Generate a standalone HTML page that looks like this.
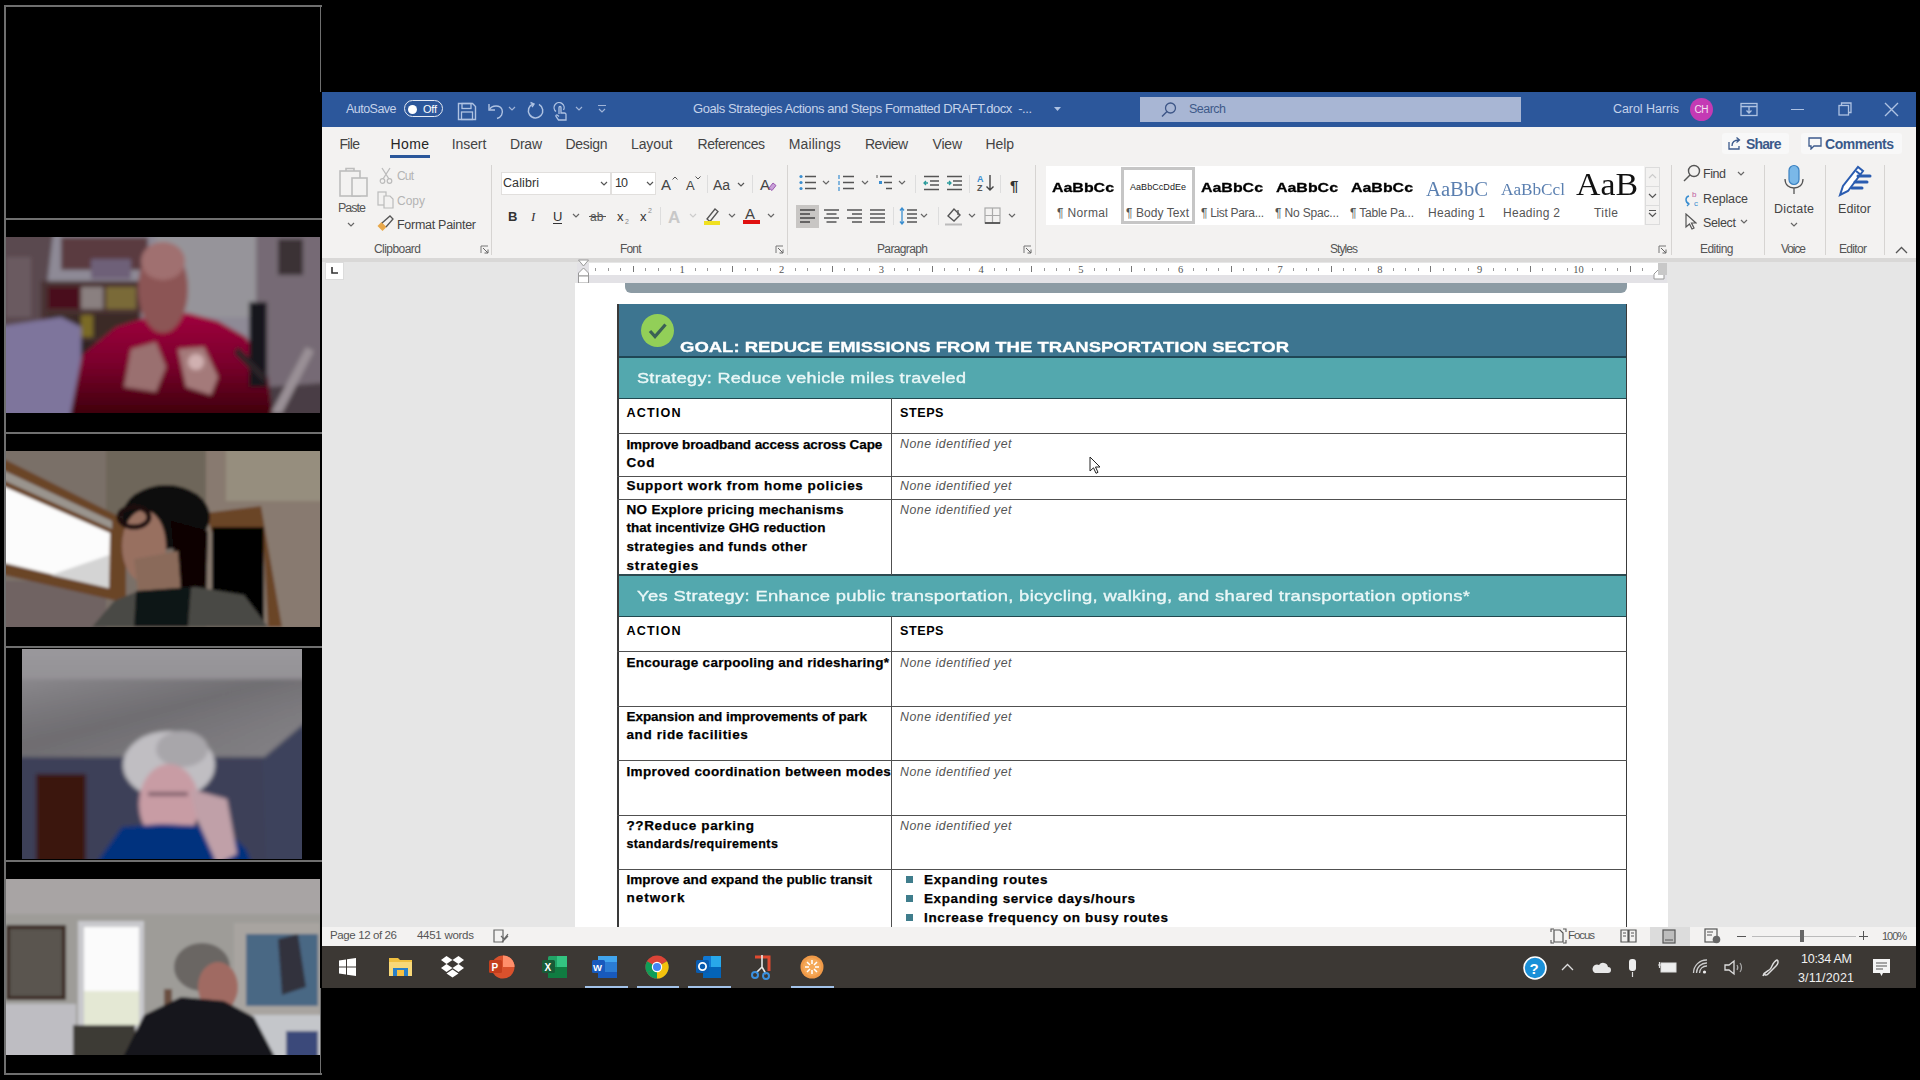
<!DOCTYPE html>
<html><head><meta charset="utf-8">
<style>
*{margin:0;padding:0;box-sizing:border-box}
html,body{width:1920px;height:1080px;overflow:hidden;background:#000;font-family:"Liberation Sans",sans-serif;position:relative}
.a{position:absolute}
.t{position:absolute;white-space:nowrap;line-height:1}
</style></head><body>
<div class="a" style="left:4px;top:5px;width:2px;height:1070px;background:#6f6f6f"></div>
<div class="a" style="left:320px;top:5px;width:1px;height:87px;background:#6f6f6f"></div>
<div class="a" style="left:320px;top:988px;width:1px;height:87px;background:#6f6f6f"></div>
<div class="a" style="left:4px;top:5px;width:318px;height:2px;background:#6f6f6f"></div>
<div class="a" style="left:4px;top:218px;width:318px;height:2px;background:#6f6f6f"></div>
<div class="a" style="left:4px;top:432px;width:318px;height:2px;background:#6f6f6f"></div>
<div class="a" style="left:4px;top:646px;width:318px;height:2px;background:#6f6f6f"></div>
<div class="a" style="left:4px;top:860px;width:318px;height:2px;background:#6f6f6f"></div>
<div class="a" style="left:4px;top:1073px;width:318px;height:2px;background:#6f6f6f"></div>
<svg class="a" style="left:6px;top:237px" width="314" height="176" viewBox="0 0 314 176"><defs><linearGradient id="sw237" x1="0" y1="0" x2="0" y2="1"><stop offset="0" stop-color="#a0003e"/><stop offset="0.45" stop-color="#7a002c"/><stop offset="1" stop-color="#300004"/></linearGradient><filter id="f237" x="-5%" y="-5%" width="110%" height="110%"><feGaussianBlur stdDeviation="2.0"/></filter><clipPath id="cf237"><rect width="314" height="176"/></clipPath></defs><g clip-path="url(#cf237)"><g filter="url(#f237)">
<rect x="-10" y="-10" width="340" height="200" fill="#8e8a96"/>
<rect x="150" y="-10" width="110" height="90" fill="#96949a"/>
<rect x="250" y="-10" width="80" height="200" fill="#766a74"/>
<polygon points="262,150 330,145 330,190 262,190" fill="#4a3e44"/>
<polygon points="-10,-10 48,-10 42,40 35,95 -10,100" fill="#5a4a50"/>
<rect x="0" y="20" width="25" height="60" fill="#6a5a60"/>
<rect x="55" y="0" width="87" height="33" fill="#5a3a40"/>
<rect x="85" y="22" width="40" height="20" fill="#6e6078"/>
<rect x="35" y="44" width="100" height="92" fill="#4a3030"/>
<rect x="42" y="50" width="33" height="22" fill="#48101c"/>
<rect x="75" y="50" width="22" height="22" fill="#8a8080"/>
<rect x="100" y="50" width="30" height="22" fill="#7a6a38"/>
<rect x="42" y="77" width="90" height="25" fill="#3a2a28"/>
<rect x="75" y="78" width="12" height="22" fill="#7a6a28"/>
<rect x="70" y="104" width="60" height="30" fill="#2e2424"/>
<polygon points="-10,90 55,80 75,90 75,190 -10,190" fill="#7e749c"/>
<polygon points="62,190 76,118 110,90 148,78 182,76 212,84 240,100 262,140 268,190" fill="url(#sw237)"/>
<ellipse cx="157" cy="52" rx="25" ry="44" fill="#8c5454"/>
<ellipse cx="157" cy="24" rx="22" ry="19" fill="#a07070"/>
<polygon points="118,150 125,112 150,105 160,130 150,155" fill="#9a7070"/>
<polygon points="172,112 198,110 212,140 205,158 180,150" fill="#a47a7a"/>
<ellipse cx="190" cy="125" rx="8" ry="8" fill="#d0b0b0"/>
<rect x="243" y="65" width="18" height="85" fill="#18161a"/>
<rect x="272" y="2" width="25" height="36" fill="#3a3034"/>
<polygon points="265,176 300,110 308,114 276,176" fill="#9a9096"/><polygon points="232,110 262,140 258,146 228,116" fill="#2a2428"/>
</g></g></svg>
<svg class="a" style="left:6px;top:451px" width="314" height="176" viewBox="0 0 314 176"><defs><filter id="f451" x="-5%" y="-5%" width="110%" height="110%"><feGaussianBlur stdDeviation="1.8"/></filter><clipPath id="cf451"><rect width="314" height="176"/></clipPath></defs><g clip-path="url(#cf451)"><g filter="url(#f451)">
<rect x="-10" y="-10" width="340" height="200" fill="#7a7068"/>
<rect x="100" y="-10" width="100" height="80" fill="#6e665a"/>
<rect x="200" y="-10" width="130" height="200" fill="#887a70"/>
<rect x="220" y="-10" width="110" height="60" fill="#968e7e"/>
<rect x="-10" y="130" width="110" height="60" fill="#706462"/>
<polygon points="-10,4 110,64 120,72 120,152 -10,122" fill="#6a4428"/>
<polygon points="-10,16 106,70 106,78 -10,26" fill="#9a948e"/>
<polygon points="-10,32 104,82 103,137 -10,110" fill="#fcfcfc"/>
<polygon points="45,124 103,104 103,137" fill="#d4d4d4"/>
<polygon points="200,62 255,55 276,176 262,176 257,76 206,82" fill="#6a4428"/>
<rect x="206" y="76" width="52" height="100" fill="#000"/>
<ellipse cx="160" cy="66" rx="44" ry="32" fill="#0e0808"/>
<polygon points="165,70 202,80 200,150 172,146" fill="#0a0606"/>
<ellipse cx="138" cy="95" rx="22" ry="36" fill="#987060"/>
<polygon points="128,108 172,100 175,142 132,142" fill="#8a6a5a"/>
<ellipse cx="128" cy="66" rx="15" ry="10" fill="none" stroke="#1a0a08" stroke-width="5"/>
<polygon points="86,176 108,150 132,140 190,136 238,144 262,176" fill="#4a4844"/>
<polygon points="128,176 130,140 185,136 182,176" fill="#101414"/>
</g></g></svg>
<svg class="a" style="left:22px;top:649px" width="280" height="210" viewBox="0 0 280 210"><defs><linearGradient id="gl649" x1="0" y1="0" x2="1" y2="1"><stop offset="0" stop-color="#6a686c" stop-opacity="0.2"/><stop offset="0.45" stop-color="#6a686c" stop-opacity="0.85"/><stop offset="1" stop-color="#6a686c" stop-opacity="0"/></linearGradient><linearGradient id="g649" x1="0" y1="0" x2="0" y2="1"><stop offset="0" stop-color="#9c9a9e"/><stop offset="1" stop-color="#848286"/></linearGradient><filter id="f649" x="-5%" y="-5%" width="110%" height="110%"><feGaussianBlur stdDeviation="2.0"/></filter><clipPath id="cf649"><rect width="280" height="210"/></clipPath></defs><g clip-path="url(#cf649)"><g filter="url(#f649)">
<rect x="-10" y="-10" width="300" height="230" fill="#3c4058"/>
<polygon points="-10,-10 290,-10 290,68 244,108 -10,108" fill="url(#g649)"/><polygon points="-10,30 290,30 290,68 244,108 -10,108" fill="url(#gl649)"/>
<polygon points="240,110 290,68 290,220 244,220" fill="#3e425c"/>
<rect x="14" y="125" width="50" height="90" fill="#3a1210"/>
<ellipse cx="147" cy="116" rx="46" ry="34" fill="#c0bec2"/>
<ellipse cx="160" cy="100" rx="26" ry="18" fill="#a8a6aa"/>
<ellipse cx="147" cy="155" rx="30" ry="40" fill="#c89ca4"/>
<rect x="126" y="143" width="40" height="4" fill="#7a5a66"/>
<polygon points="70,220 100,178 140,175 200,178 224,200 232,220" fill="#06337e"/>
<polygon points="168,140 205,150 215,205 195,215 175,170" fill="#c0a0a8"/>
</g></g></svg>
<svg class="a" style="left:6px;top:879px" width="314" height="176" viewBox="0 0 314 176"><defs><filter id="f879" x="-5%" y="-5%" width="110%" height="110%"><feGaussianBlur stdDeviation="1.8"/></filter><clipPath id="cf879"><rect width="314" height="176"/></clipPath></defs><g clip-path="url(#cf879)"><g filter="url(#f879)">
<rect x="-10" y="-10" width="340" height="200" fill="#9e9c98"/>
<rect x="-10" y="-10" width="340" height="45" fill="#a8a4a4"/>
<rect x="-10" y="125" width="80" height="65" fill="#bebdc2"/><rect x="225" y="136" width="100" height="50" fill="#c4c6ca"/>
<rect x="0" y="46" width="60" height="75" fill="#3a2a20"/>
<rect x="4" y="50" width="52" height="67" fill="#5a5450"/>
<rect x="72" y="42" width="66" height="108" fill="#c8c8cc"/>
<rect x="78" y="48" width="55" height="98" fill="#fbfbfb"/>
<rect x="78" y="112" width="55" height="34" fill="#e4e8d4"/>
<rect x="228" y="44" width="86" height="92" fill="#a8a4a0"/>
<rect x="240" y="55" width="72" height="72" fill="#4a6884"/>
<polygon points="272,60 292,55 300,108 276,116" fill="#30323c"/>
<rect x="158" y="110" width="8" height="25" fill="#6a5040"/>
<ellipse cx="196" cy="88" rx="28" ry="24" fill="#6a6664"/>
<ellipse cx="212" cy="108" rx="20" ry="25" fill="#a06a62"/>
<rect x="67" y="146" width="62" height="34" fill="#3e3a34"/>
<polygon points="116,180 138,136 175,118 218,122 248,138 270,180" fill="#18161a"/>
<rect x="280" y="152" width="32" height="28" fill="#3a4a7a"/>
</g></g></svg>
<div class="a" style="left:322px;top:92px;width:1594px;height:896px;background:#f3f2f1"></div>
<div class="a" style="left:322px;top:92px;width:1594px;height:35px;background:#2c579b"></div>
<div class="t" id="t1" style="left:346.0px;top:103.12px;font-size:12.50px;color:#c4d2ea;letter-spacing:-0.531px;">AutoSave</div>
<div class="a" style="left:404px;top:100px;width:39px;height:17px;border:1.5px solid #e4eaf4;border-radius:9px"></div>
<div class="a" style="left:408px;top:105px;width:9px;height:9px;border-radius:50%;background:#fff"></div>
<div class="t" id="t2" style="left:423.0px;top:103.89px;font-size:11.00px;color:#fff;letter-spacing:-0.242px;">Off</div>
<svg class="a" style="left:457px;top:102px" width="20" height="19" viewBox="0 0 20 19"><path d="M1.5 1.5h14l3 3v13h-17z" fill="none" stroke="#aec2e2" stroke-width="1.4"/><rect x="5" y="1.5" width="9" height="5" fill="none" stroke="#aec2e2" stroke-width="1.3"/><rect x="4.5" y="10" width="11" height="7.5" fill="none" stroke="#aec2e2" stroke-width="1.3"/></svg>
<svg class="a" style="left:487px;top:101px" width="18" height="19" viewBox="0 0 18 19"><path d="M2 3v6h6" fill="none" stroke="#aec2e2" stroke-width="1.4"/><path d="M2.5 8.5C5 4 13 3.5 15 8.5c1.5 4-1 8-5 9" fill="none" stroke="#aec2e2" stroke-width="1.4"/></svg>
<svg class="a" style="left:508px;top:106px" width="8" height="6" viewBox="0 0 8 6"><path d="M1 1l3 3 3-3" fill="none" stroke="#a0b4d8" stroke-width="1.2"/></svg>
<svg class="a" style="left:526px;top:101px" width="19" height="19" viewBox="0 0 19 19"><path d="M7 3A7.2 7.2 0 1 0 13 3.4" fill="none" stroke="#aec2e2" stroke-width="1.5"/><path d="M4.5 1.5L8 3 6 6" fill="none" stroke="#aec2e2" stroke-width="1.4"/></svg>
<svg class="a" style="left:552px;top:102px" width="16" height="19" viewBox="0 0 16 19"><path d="M4 9.5A5 5 0 1 1 11.5 8" fill="none" stroke="#aec2e2" stroke-width="1.3"/><path d="M7 12V5.5a1 1 0 0 1 2 0V11h3.5a1.5 1.5 0 0 1 1.5 1.5V18H6.5L4 14.5a1 1 0 0 1 1.5-1.3L7 14.5" fill="none" stroke="#aec2e2" stroke-width="1.3"/></svg>
<svg class="a" style="left:575px;top:106px" width="8" height="6" viewBox="0 0 8 6"><path d="M1 1l3 3 3-3" fill="none" stroke="#a0b4d8" stroke-width="1.2"/></svg>
<svg class="a" style="left:597px;top:104px" width="10" height="11" viewBox="0 0 10 11"><path d="M1 1.5h8M2 5l3 3 3-3" fill="none" stroke="#a0b4d8" stroke-width="1.2"/></svg>
<div class="t" id="t3" style="left:693.0px;top:102.00px;font-size:13.00px;color:#c4d2ea;letter-spacing:-0.443px;">Goals Strategies Actions and Steps Formatted DRAFT.docx&nbsp; -...</div>
<svg class="a" style="left:1053px;top:106px" width="9" height="6" viewBox="0 0 9 6"><path d="M1 1h7l-3.5 4z" fill="#aec2e2"/></svg>
<div class="a" style="left:1140px;top:97px;width:381px;height:25px;background:#a8b6d4"></div>
<svg class="a" style="left:1160px;top:101px" width="18" height="18" viewBox="0 0 18 18"><circle cx="10.5" cy="7" r="5" fill="none" stroke="#3d5687" stroke-width="1.3"/><path d="M7 10.5L2 15.5" stroke="#3d5687" stroke-width="1.4"/></svg>
<div class="t" id="t4" style="left:1189.0px;top:102.92px;font-size:12.50px;color:#3f5a89;letter-spacing:-0.522px;">Search</div>
<div class="t" id="t5" style="left:1613.0px;top:103.42px;font-size:12.50px;color:#c4d2ea;letter-spacing:-0.062px;">Carol Harris</div>
<div class="a" style="left:1690px;top:98px;width:23px;height:23px;border-radius:50%;background:#c43ab4"></div>
<div class="t" id="t6" style="left:1694.5px;top:104.53px;font-size:10.00px;color:#f4e0f0;letter-spacing:-0.453px;">CH</div>
<svg class="a" style="left:1740px;top:102px" width="18" height="15" viewBox="0 0 18 15"><rect x="1" y="1.5" width="16" height="12" fill="none" stroke="#aec2e2" stroke-width="1.3"/><path d="M1 4.5h16M9 5v6M6.5 8.5L9 11l2.5-2.5" fill="none" stroke="#aec2e2" stroke-width="1.3"/></svg>
<div class="a" style="left:1791px;top:109px;width:13px;height:1.3px;background:#aec2e2"></div>
<svg class="a" style="left:1838px;top:102px" width="14" height="14" viewBox="0 0 14 14"><rect x="1" y="3.5" width="9.5" height="9.5" fill="none" stroke="#aec2e2" stroke-width="1.3"/><path d="M3.5 3.5V1h9.5v9.5H10.5" fill="none" stroke="#aec2e2" stroke-width="1.3"/></svg>
<svg class="a" style="left:1884px;top:102px" width="15" height="15" viewBox="0 0 15 15"><path d="M1 1l13 13M14 1L1 14" stroke="#aec2e2" stroke-width="1.4"/></svg>
<div class="t" id="t7" style="left:339.5px;top:136.90px;font-size:14.00px;color:#444;letter-spacing:-0.688px;">File</div>
<div class="t" id="t8" style="left:390.5px;top:136.90px;font-size:14.00px;color:#262626;letter-spacing:0.380px;">Home</div>
<div class="t" id="t9" style="left:451.8px;top:136.90px;font-size:14.00px;color:#444;letter-spacing:-0.103px;">Insert</div>
<div class="t" id="t10" style="left:510.0px;top:136.90px;font-size:14.00px;color:#444;letter-spacing:-0.224px;">Draw</div>
<div class="t" id="t11" style="left:565.5px;top:136.90px;font-size:14.00px;color:#444;letter-spacing:-0.319px;">Design</div>
<div class="t" id="t12" style="left:631.0px;top:136.90px;font-size:14.00px;color:#444;letter-spacing:-0.109px;">Layout</div>
<div class="t" id="t13" style="left:697.5px;top:136.90px;font-size:14.00px;color:#444;letter-spacing:-0.455px;">References</div>
<div class="t" id="t14" style="left:788.8px;top:136.90px;font-size:14.00px;color:#444;letter-spacing:0.092px;">Mailings</div>
<div class="t" id="t15" style="left:865.0px;top:136.90px;font-size:14.00px;color:#444;letter-spacing:-0.581px;">Review</div>
<div class="t" id="t16" style="left:932.5px;top:136.90px;font-size:14.00px;color:#444;letter-spacing:-0.198px;">View</div>
<div class="t" id="t17" style="left:985.5px;top:136.90px;font-size:14.00px;color:#444;letter-spacing:-0.099px;">Help</div>
<div class="a" style="left:390px;top:154.5px;width:40px;height:3px;background:#2b579a"></div>
<div class="a" style="left:1722px;top:133px;width:67px;height:21px;background:#f8f8f8;border-radius:3px"></div>
<svg class="a" style="left:1728px;top:136px" width="14" height="14" viewBox="0 0 14 14"><path d="M1 6v7h10v-3" fill="none" stroke="#3c5a8c" stroke-width="1.3"/><path d="M4 10c0-4 3-6 7-6M8.5 1.5L11.5 4 8.5 6.5" fill="none" stroke="#3c5a8c" stroke-width="1.3"/></svg>
<div class="t" id="t18" style="left:1746.0px;top:136.55px;font-size:14.00px;font-weight:bold;color:#3b5a8a;letter-spacing:-0.855px;">Share</div>
<div class="a" style="left:1801px;top:133px;width:101px;height:21px;background:#f8f8f8;border-radius:3px"></div>
<svg class="a" style="left:1808px;top:137px" width="14" height="13" viewBox="0 0 14 13"><path d="M1 1h12v8H6l-3 3V9H1z" fill="none" stroke="#3c5a8c" stroke-width="1.3"/></svg>
<div class="t" id="t19" style="left:1825.0px;top:136.55px;font-size:14.00px;font-weight:bold;color:#3b5a8a;letter-spacing:-0.480px;">Comments</div>
<div class="a" style="left:491.0px;top:165px;width:1px;height:90px;background:#d6d4d2"></div>
<div class="a" style="left:787.0px;top:165px;width:1px;height:90px;background:#d6d4d2"></div>
<div class="a" style="left:1035.0px;top:165px;width:1px;height:90px;background:#d6d4d2"></div>
<div class="a" style="left:1671.0px;top:165px;width:1px;height:90px;background:#d6d4d2"></div>
<div class="a" style="left:1763.5px;top:165px;width:1px;height:90px;background:#d6d4d2"></div>
<div class="a" style="left:1825.0px;top:165px;width:1px;height:90px;background:#d6d4d2"></div>
<div class="a" style="left:1883.5px;top:165px;width:1px;height:90px;background:#d6d4d2"></div>
<div class="t" id="t20" style="left:374.0px;top:242.64px;font-size:12.00px;color:#555;letter-spacing:-0.547px;">Clipboard</div>
<div class="t" id="t21" style="left:620.0px;top:242.64px;font-size:12.00px;color:#555;letter-spacing:-0.839px;">Font</div>
<div class="t" id="t22" style="left:877.0px;top:242.64px;font-size:12.00px;color:#555;letter-spacing:-0.631px;">Paragraph</div>
<div class="t" id="t23" style="left:1330.0px;top:242.64px;font-size:12.00px;color:#555;letter-spacing:-0.938px;">Styles</div>
<div class="t" id="t24" style="left:1700.0px;top:242.64px;font-size:12.00px;color:#555;letter-spacing:-0.534px;">Editing</div>
<div class="t" id="t25" style="left:1781.0px;top:242.64px;font-size:12.00px;color:#555;letter-spacing:-1.090px;">Voice</div>
<div class="t" id="t26" style="left:1839.0px;top:242.64px;font-size:12.00px;color:#555;letter-spacing:-0.672px;">Editor</div>
<svg class="a" style="left:480px;top:245px" width="9" height="9" viewBox="0 0 9 9"><path d="M1 8V1h7" fill="none" stroke="#777" stroke-width="1"/><path d="M3 3l5 5M4.5 8H8V4.5" fill="none" stroke="#666" stroke-width="1"/></svg>
<svg class="a" style="left:775px;top:245px" width="9" height="9" viewBox="0 0 9 9"><path d="M1 8V1h7" fill="none" stroke="#777" stroke-width="1"/><path d="M3 3l5 5M4.5 8H8V4.5" fill="none" stroke="#666" stroke-width="1"/></svg>
<svg class="a" style="left:1023px;top:245px" width="9" height="9" viewBox="0 0 9 9"><path d="M1 8V1h7" fill="none" stroke="#777" stroke-width="1"/><path d="M3 3l5 5M4.5 8H8V4.5" fill="none" stroke="#666" stroke-width="1"/></svg>
<svg class="a" style="left:1658px;top:245px" width="9" height="9" viewBox="0 0 9 9"><path d="M1 8V1h7" fill="none" stroke="#777" stroke-width="1"/><path d="M3 3l5 5M4.5 8H8V4.5" fill="none" stroke="#666" stroke-width="1"/></svg>
<svg class="a" style="left:1895px;top:246px" width="13" height="8" viewBox="0 0 13 8"><path d="M1 7l5.5-5.5L12 7" fill="none" stroke="#555" stroke-width="1.3"/></svg>
<svg class="a" style="left:338px;top:166px" width="32" height="34" viewBox="0 0 32 34"><rect x="2" y="5" width="20" height="25" fill="none" stroke="#bdbdbd" stroke-width="1.6"/><path d="M8 5V2.5h8V5" fill="none" stroke="#bdbdbd" stroke-width="1.6"/><rect x="14" y="12" width="15" height="18" fill="#f3f2f1" stroke="#bdbdbd" stroke-width="1.6"/></svg>
<div class="t" id="t27" style="left:338.0px;top:202.22px;font-size:12.50px;color:#555;letter-spacing:-0.992px;">Paste</div>
<svg class="a" style="left:347px;top:222px" width="8" height="5" viewBox="0 0 8 5"><path d="M1 1l3 3 3-3" fill="none" stroke="#666" stroke-width="1.2"/></svg>
<svg class="a" style="left:379px;top:167px" width="14" height="17" viewBox="0 0 14 17"><path d="M3 1l7 11M11 1L4 12" stroke="#bbb" stroke-width="1.3"/><circle cx="3.5" cy="14" r="2.3" fill="none" stroke="#bbb" stroke-width="1.2"/><circle cx="10.5" cy="14" r="2.3" fill="none" stroke="#bbb" stroke-width="1.2"/></svg>
<div class="t" id="t28" style="left:397.0px;top:170.34px;font-size:12.00px;color:#b4b4b4;letter-spacing:-0.844px;">Cut</div>
<svg class="a" style="left:377px;top:191px" width="17" height="18" viewBox="0 0 17 18"><rect x="1" y="1" width="8" height="13" fill="none" stroke="#bbb" stroke-width="1.2"/><path d="M7 5h6l3 3v9H7z" fill="#f3f2f1" stroke="#bbb" stroke-width="1.2"/></svg>
<div class="t" id="t29" style="left:397.0px;top:194.84px;font-size:12.00px;color:#b4b4b4;letter-spacing:-0.005px;">Copy</div>
<svg class="a" style="left:376px;top:215px" width="18" height="18" viewBox="0 0 18 18"><path d="M1.5 11l5 5 4-4-5-5z" fill="#e8a84a"/><path d="M6 8l8-7 3 3-7 8" fill="none" stroke="#555" stroke-width="1.3"/></svg>
<div class="t" id="t30" style="left:397.0px;top:218.62px;font-size:12.50px;color:#444;letter-spacing:-0.282px;">Format Painter</div>
<div class="a" style="left:501px;top:172px;width:110px;height:23px;background:#fff;border:1px solid #e1dfdd"></div>
<div class="a" style="left:611px;top:172px;width:45px;height:23px;background:#fff;border:1px solid #e1dfdd"></div>
<div class="t" id="t31" style="left:503.0px;top:177.42px;font-size:12.50px;color:#333;letter-spacing:0.094px;">Calibri</div>
<div class="t" id="t32" style="left:615.0px;top:177.42px;font-size:12.50px;color:#333;letter-spacing:-0.906px;">10</div>
<svg class="a" style="left:600px;top:181px" width="8" height="6" viewBox="0 0 8 6"><path d="M1 1l3 3 3-3" fill="none" stroke="#555" stroke-width="1.2"/></svg>
<svg class="a" style="left:646px;top:181px" width="8" height="6" viewBox="0 0 8 6"><path d="M1 1l3 3 3-3" fill="none" stroke="#555" stroke-width="1.2"/></svg>
<div class="t" id="t33" style="left:661.0px;top:177.30px;font-size:15.00px;color:#444;">A</div>
<svg class="a" style="left:672px;top:176px" width="6" height="4" viewBox="0 0 6 4"><path d="M0.5 3.5l2.5-2.5 2.5 2.5" fill="none" stroke="#555" stroke-width="1"/></svg>
<div class="t" id="t34" style="left:686.0px;top:179.00px;font-size:13.00px;color:#444;">A</div>
<svg class="a" style="left:695px;top:176px" width="6" height="4" viewBox="0 0 6 4"><path d="M0.5 0.5l2.5 2.5 2.5-2.5" fill="none" stroke="#555" stroke-width="1"/></svg>
<div class="a" style="left:707px;top:175px;width:1px;height:18px;background:#ddd"></div>
<div class="t" id="t35" style="left:713.0px;top:178.15px;font-size:14.00px;color:#444;">Aa</div>
<svg class="a" style="left:737px;top:182px" width="8" height="5" viewBox="0 0 8 5"><path d="M1 1l3 3 3-3" fill="none" stroke="#555" stroke-width="1.2"/></svg>
<div class="a" style="left:752px;top:175px;width:1px;height:18px;background:#ddd"></div>
<div class="t" id="t36" style="left:760.0px;top:177.30px;font-size:15.00px;color:#444;">A</div>
<svg class="a" style="left:767px;top:181px" width="10" height="10" viewBox="0 0 10 10"><path d="M2 7l4-5 3 2.5-4 5z" fill="#c8a0d8" stroke="#9a5ab0" stroke-width="1"/></svg>
<div class="t" id="t37" style="left:508.0px;top:210.00px;font-size:13.00px;font-weight:bold;color:#333;">B</div>
<div class="t" id="t38" style="left:531.0px;top:210.06px;font-size:13.00px;font-style:italic;color:#333;font-family:'Liberation Serif',serif;">I</div>
<div class="t" id="t39" style="left:553.0px;top:210.00px;font-size:13.00px;color:#333;">U</div>
<div class="a" style="left:553px;top:223px;width:9px;height:1px;background:#333"></div>
<svg class="a" style="left:572px;top:213px" width="8" height="5" viewBox="0 0 8 5"><path d="M1 1l3 3 3-3" fill="none" stroke="#666" stroke-width="1.2"/></svg>
<div class="t" id="t40" style="left:590.0px;top:210.84px;font-size:12.00px;color:#555;">ab</div>
<div class="a" style="left:589px;top:216px;width:17px;height:1.2px;background:#555"></div>
<div class="t" id="t41" style="left:617.0px;top:210.00px;font-size:13.00px;color:#333;">x</div>
<div class="t" id="t42" style="left:625.0px;top:218.07px;font-size:7.00px;color:#888;">2</div>
<div class="t" id="t43" style="left:640.0px;top:210.00px;font-size:13.00px;color:#333;">x</div>
<div class="t" id="t44" style="left:648.0px;top:207.07px;font-size:7.00px;color:#888;">2</div>
<div class="a" style="left:660px;top:207px;width:1px;height:18px;background:#ddd"></div>
<div class="t" id="t45" style="left:668.0px;top:208.61px;font-size:17.00px;font-weight:bold;color:#c8c8c8;">A</div>
<svg class="a" style="left:689px;top:213px" width="8" height="5" viewBox="0 0 8 5"><path d="M1 1l3 3 3-3" fill="none" stroke="#ccc" stroke-width="1.2"/></svg>
<svg class="a" style="left:703px;top:206px" width="18" height="19" viewBox="0 0 18 19"><path d="M4 13l8-10 3 2.5-8 10z" fill="none" stroke="#555" stroke-width="1.3"/><rect x="1" y="15" width="16" height="4" fill="#f0e020"/></svg>
<svg class="a" style="left:728px;top:213px" width="8" height="5" viewBox="0 0 8 5"><path d="M1 1l3 3 3-3" fill="none" stroke="#666" stroke-width="1.2"/></svg>
<div class="t" id="t46" style="left:745.0px;top:206.30px;font-size:15.00px;color:#444;">A</div>
<div class="a" style="left:743px;top:220px;width:17px;height:4px;background:#e01010"></div>
<svg class="a" style="left:767px;top:213px" width="8" height="5" viewBox="0 0 8 5"><path d="M1 1l3 3 3-3" fill="none" stroke="#666" stroke-width="1.2"/></svg>
<svg class="a" style="left:799px;top:174px" width="18" height="17" viewBox="0 0 18 17"><circle cx="2" cy="2.5" r="1.6" fill="#3a8ed0"/><circle cx="2" cy="8.5" r="1.6" fill="#3a8ed0"/><circle cx="2" cy="14.5" r="1.6" fill="#3a8ed0"/><path d="M6 2.5h11M6 8.5h11M6 14.5h11" stroke="#555" stroke-width="1.5"/></svg>
<svg class="a" style="left:837px;top:174px" width="18" height="17" viewBox="0 0 18 17"><path d="M2 1v4M2 7v4M2 13v4" stroke="#3a8ed0" stroke-width="1.2"/><path d="M6 2.5h11M6 8.5h11M6 14.5h11" stroke="#555" stroke-width="1.5"/></svg>
<svg class="a" style="left:876px;top:174px" width="18" height="17" viewBox="0 0 18 17"><path d="M1 1v3" stroke="#555" stroke-width="1"/><path d="M4 2.5h12M8 8.5h8M10 14.5h6" stroke="#555" stroke-width="1.5"/><rect x="3" y="7" width="3" height="3" fill="#3a8ed0"/></svg>
<svg class="a" style="left:822px;top:180px" width="8" height="5" viewBox="0 0 8 5"><path d="M1 1l3 3 3-3" fill="none" stroke="#666" stroke-width="1.2"/></svg>
<svg class="a" style="left:861px;top:180px" width="8" height="5" viewBox="0 0 8 5"><path d="M1 1l3 3 3-3" fill="none" stroke="#666" stroke-width="1.2"/></svg>
<svg class="a" style="left:898px;top:180px" width="8" height="5" viewBox="0 0 8 5"><path d="M1 1l3 3 3-3" fill="none" stroke="#666" stroke-width="1.2"/></svg>
<div class="a" style="left:915px;top:175px;width:1px;height:18px;background:#ddd"></div>
<svg class="a" style="left:923px;top:175px" width="17" height="16" viewBox="0 0 17 16"><path d="M1 1.5h15M7 6h9M7 10h9M1 14.5h15" stroke="#555" stroke-width="1.5"/><path d="M5 8H1M3 6l-2 2 2 2" fill="none" stroke="#2a9a9a" stroke-width="1.3"/></svg>
<svg class="a" style="left:946px;top:175px" width="17" height="16" viewBox="0 0 17 16"><path d="M1 1.5h15M7 6h9M7 10h9M1 14.5h15" stroke="#555" stroke-width="1.5"/><path d="M1 8h4M3 6l2 2-2 2" fill="none" stroke="#2a9a9a" stroke-width="1.3"/></svg>
<div class="a" style="left:969px;top:175px;width:1px;height:18px;background:#ddd"></div>
<div class="t" id="t47" style="left:977.0px;top:175.38px;font-size:9.00px;font-weight:bold;color:#3a8ed0;">A</div>
<div class="t" id="t48" style="left:977.0px;top:184.38px;font-size:9.00px;font-weight:bold;color:#555;">Z</div>
<svg class="a" style="left:985px;top:174px" width="10" height="18" viewBox="0 0 10 18"><path d="M5 1v15M1.5 12.5L5 16l3.5-3.5" fill="none" stroke="#444" stroke-width="1.4"/></svg>
<div class="a" style="left:1000px;top:175px;width:1px;height:18px;background:#ddd"></div>
<div class="t" id="t49" style="left:1010.0px;top:178.30px;font-size:15.00px;font-weight:bold;color:#333;">&para;</div>
<div class="a" style="left:796px;top:205px;width:23px;height:23px;background:#c8c6c4"></div>
<svg class="a" style="left:799px;top:208px" width="17" height="16" viewBox="0 0 17 16"><path d="M1 2h15M1 6h10M1 10h15M1 14h10" stroke="#444" stroke-width="1.6"/></svg>
<svg class="a" style="left:823px;top:208px" width="17" height="16" viewBox="0 0 17 16"><path d="M1 2h15M3.5 6h10M1 10h15M3.5 14h10" stroke="#555" stroke-width="1.5"/></svg>
<svg class="a" style="left:846px;top:208px" width="17" height="16" viewBox="0 0 17 16"><path d="M1 2h15M6 6h10M1 10h15M6 14h10" stroke="#555" stroke-width="1.5"/></svg>
<svg class="a" style="left:869px;top:208px" width="17" height="16" viewBox="0 0 17 16"><path d="M1 2h15M1 6h15M1 10h15M1 14h15" stroke="#555" stroke-width="1.5"/></svg>
<div class="a" style="left:893px;top:207px;width:1px;height:18px;background:#ddd"></div>
<svg class="a" style="left:899px;top:207px" width="19" height="18" viewBox="0 0 19 18"><path d="M3 1v16M1 3.5L3 1l2 2.5M1 14.5L3 17l2-2.5" fill="none" stroke="#3a8ed0" stroke-width="1.3"/><path d="M8 3h10M8 7h10M8 11h10M8 15h10" stroke="#555" stroke-width="1.5"/></svg>
<svg class="a" style="left:920px;top:213px" width="8" height="5" viewBox="0 0 8 5"><path d="M1 1l3 3 3-3" fill="none" stroke="#666" stroke-width="1.2"/></svg>
<div class="a" style="left:938px;top:207px;width:1px;height:18px;background:#ddd"></div>
<svg class="a" style="left:944px;top:206px" width="19" height="20" viewBox="0 0 19 20"><path d="M4 10l6-7 6 6-6 6z" fill="none" stroke="#555" stroke-width="1.4"/><path d="M14 4v5" stroke="#555" stroke-width="1.3"/><path d="M1 18.5h17" stroke="#bbb" stroke-width="2"/></svg>
<svg class="a" style="left:968px;top:213px" width="8" height="5" viewBox="0 0 8 5"><path d="M1 1l3 3 3-3" fill="none" stroke="#666" stroke-width="1.2"/></svg>
<svg class="a" style="left:984px;top:207px" width="17" height="17" viewBox="0 0 17 17"><rect x="1" y="1" width="15" height="15" fill="none" stroke="#aaa" stroke-width="1.2"/><path d="M8.5 1v15M1 8.5h15" stroke="#aaa" stroke-width="1.2"/><path d="M1 16h15" stroke="#444" stroke-width="1.6"/></svg>
<svg class="a" style="left:1008px;top:213px" width="8" height="5" viewBox="0 0 8 5"><path d="M1 1l3 3 3-3" fill="none" stroke="#666" stroke-width="1.2"/></svg>
<div class="a" style="left:1046px;top:166px;width:598px;height:59px;background:#fff"></div>
<div class="a" style="left:1121px;top:167px;width:74px;height:57px;border:3px solid #c6c6c6"></div>
<div class="t" id="t50" style="left:1052.0px;top:181.17px;font-size:13.50px;font-weight:bold;color:#000;-webkit-text-stroke:0.3px #000;transform:scaleX(1.1806);transform-origin:0 0;">AaBbCc</div>
<div class="t" id="t51" style="left:1057.0px;top:206.54px;font-size:12.00px;color:#555;letter-spacing:0.364px;">&para; Normal</div>
<div class="t" id="t52" style="left:1130.0px;top:183.38px;font-size:9.00px;color:#222;letter-spacing:0.052px;">AaBbCcDdEe</div>
<div class="t" id="t53" style="left:1126.0px;top:206.54px;font-size:12.00px;color:#555;letter-spacing:0.073px;">&para; Body Text</div>
<div class="t" id="t54" style="left:1201.0px;top:181.17px;font-size:13.50px;font-weight:bold;color:#000;-webkit-text-stroke:0.3px #000;transform:scaleX(1.1806);transform-origin:0 0;">AaBbCc</div>
<div class="t" id="t55" style="left:1201.0px;top:206.54px;font-size:12.00px;color:#555;letter-spacing:-0.319px;">&para; List Para...</div>
<div class="t" id="t56" style="left:1276.0px;top:181.17px;font-size:13.50px;font-weight:bold;color:#000;-webkit-text-stroke:0.3px #000;transform:scaleX(1.1806);transform-origin:0 0;">AaBbCc</div>
<div class="t" id="t57" style="left:1275.0px;top:206.54px;font-size:12.00px;color:#555;letter-spacing:-0.165px;">&para; No Spac...</div>
<div class="t" id="t58" style="left:1351.0px;top:181.17px;font-size:13.50px;font-weight:bold;color:#000;-webkit-text-stroke:0.3px #000;transform:scaleX(1.1806);transform-origin:0 0;">AaBbCc</div>
<div class="t" id="t59" style="left:1350.0px;top:206.54px;font-size:12.00px;color:#555;letter-spacing:-0.189px;">&para; Table Pa...</div>
<div class="t" id="t60" style="left:1426.0px;top:178.57px;font-size:20.00px;color:#5a7fb0;font-family:'Liberation Serif',serif;transform:scaleX(1.0333);transform-origin:0 0;">AaBbC</div>
<div class="t" id="t61" style="left:1428.0px;top:206.54px;font-size:12.00px;color:#555;letter-spacing:0.285px;">Heading 1</div>
<div class="t" id="t62" style="left:1501.0px;top:180.69px;font-size:17.00px;color:#5a7fb0;font-family:'Liberation Serif',serif;transform:scaleX(1.0114);transform-origin:0 0;">AaBbCcl</div>
<div class="t" id="t63" style="left:1503.0px;top:206.54px;font-size:12.00px;color:#555;letter-spacing:0.285px;">Heading 2</div>
<div class="t" id="t64" style="left:1576.0px;top:168.91px;font-size:31.00px;color:#111;font-family:'Liberation Serif',serif;transform:scaleX(1.0910);transform-origin:0 0;">AaB</div>
<div class="t" id="t65" style="left:1594.0px;top:206.54px;font-size:12.00px;color:#555;letter-spacing:0.441px;">Title</div>
<div class="a" style="left:1645px;top:167px;width:15px;height:58px;background:#f3f2f1;border:1px solid #dcdcdc"></div>
<div class="a" style="left:1645px;top:186px;width:15px;height:1px;background:#dcdcdc"></div>
<div class="a" style="left:1645px;top:205px;width:15px;height:1px;background:#dcdcdc"></div>
<svg class="a" style="left:1648px;top:193px" width="9" height="6" viewBox="0 0 9 6"><path d="M1 1l3.5 3.5L8 1" fill="none" stroke="#555" stroke-width="1.2"/></svg>
<svg class="a" style="left:1648px;top:209px" width="9" height="10" viewBox="0 0 9 10"><path d="M1 1.5h7M1 4l3.5 3.5L8 4" fill="none" stroke="#555" stroke-width="1.2"/></svg>
<svg class="a" style="left:1648px;top:173px" width="9" height="6" viewBox="0 0 9 6"><path d="M1 5l3.5-3.5L8 5" fill="none" stroke="#ccc" stroke-width="1.2"/></svg>
<svg class="a" style="left:1683px;top:164px" width="18" height="18" viewBox="0 0 18 18"><circle cx="11" cy="7" r="5.5" fill="none" stroke="#555" stroke-width="1.4"/><path d="M7 11L1 17" stroke="#555" stroke-width="1.5"/></svg>
<div class="t" id="t66" style="left:1703.0px;top:168.12px;font-size:12.50px;color:#444;letter-spacing:-0.443px;">Find</div>
<svg class="a" style="left:1737px;top:171px" width="8" height="5" viewBox="0 0 8 5"><path d="M1 1l3 3 3-3" fill="none" stroke="#666" stroke-width="1.2"/></svg>
<svg class="a" style="left:1683px;top:189px" width="18" height="18" viewBox="0 0 18 18"><path d="M6 7c-4 1-4 6 0 8" fill="none" stroke="#3a8ed0" stroke-width="1.5"/><path d="M4 13l2 2-2 2" fill="none" stroke="#3a8ed0" stroke-width="1.3"/><text x="9" y="8" font-size="8" fill="#c060a0" font-family="Liberation Sans">b</text><text x="11" y="17" font-size="8" fill="#3a8ed0" font-family="Liberation Sans">c</text></svg>
<div class="t" id="t67" style="left:1703.0px;top:192.62px;font-size:12.50px;color:#444;letter-spacing:-0.146px;">Replace</div>
<svg class="a" style="left:1685px;top:213px" width="12" height="17" viewBox="0 0 12 17"><path d="M1 1v13l3.5-3 2.5 5 2-1-2.5-5H11z" fill="none" stroke="#555" stroke-width="1.2"/></svg>
<div class="t" id="t68" style="left:1703.0px;top:216.82px;font-size:12.50px;color:#444;letter-spacing:-0.350px;">Select</div>
<svg class="a" style="left:1740px;top:219px" width="8" height="5" viewBox="0 0 8 5"><path d="M1 1l3 3 3-3" fill="none" stroke="#666" stroke-width="1.2"/></svg>
<svg class="a" style="left:1783px;top:164px" width="22" height="32" viewBox="0 0 22 32"><rect x="6" y="1.5" width="10" height="19" rx="5" fill="#7ab8e8" stroke="#3a80c0" stroke-width="1.2"/><path d="M2 15c0 6 4 9 9 9s9-3 9-9M11 24v6" fill="none" stroke="#555" stroke-width="1.3"/></svg>
<div class="t" id="t69" style="left:1774.0px;top:203.22px;font-size:12.50px;color:#444;letter-spacing:0.182px;">Dictate</div>
<svg class="a" style="left:1790px;top:222px" width="8" height="5" viewBox="0 0 8 5"><path d="M1 1l3 3 3-3" fill="none" stroke="#666" stroke-width="1.2"/></svg>
<svg class="a" style="left:1838px;top:164px" width="34" height="33" viewBox="0 0 34 33"><path d="M2 31l3-9L20 3l5 4L10 27z" fill="#fff" stroke="#2a5cb0" stroke-width="2"/><path d="M18 7l5 4" stroke="#2a5cb0" stroke-width="2"/><path d="M20 12h12M17 18h12M14 24h10" stroke="#2a5cb0" stroke-width="3" stroke-linecap="round"/></svg>
<div class="t" id="t70" style="left:1838.0px;top:203.22px;font-size:12.50px;color:#444;letter-spacing:0.069px;">Editor</div>
<div class="a" style="left:322px;top:258px;width:1594px;height:4px;background:#d9d8d7"></div>
<div class="a" style="left:322px;top:262px;width:1594px;height:665px;background:#e6e6e6"></div>
<div class="a" style="left:325px;top:262px;width:19px;height:18px;background:#fff;border:1px solid #dcdcdc"></div>
<svg class="a" style="left:330px;top:266px" width="9" height="9" viewBox="0 0 9 9"><path d="M2 1v6h6" fill="none" stroke="#333" stroke-width="1.6"/></svg>
<div class="a" style="left:577px;top:263px;width:1090px;height:20px;background:#e3e2e6"></div>
<div class="a" style="left:589px;top:263px;width:1069px;height:12px;background:#fff"></div>
<div class="a" style="left:595.2px;top:268px;width:1px;height:3px;background:#999"></div><div class="a" style="left:607.6px;top:268px;width:1px;height:3px;background:#999"></div><div class="a" style="left:620.1px;top:268px;width:1px;height:3px;background:#999"></div><div class="a" style="left:632.6px;top:266px;width:1px;height:6px;background:#777"></div><div class="a" style="left:645.0px;top:268px;width:1px;height:3px;background:#999"></div><div class="a" style="left:657.5px;top:268px;width:1px;height:3px;background:#999"></div><div class="a" style="left:669.9px;top:268px;width:1px;height:3px;background:#999"></div><div class="a" style="left:694.9px;top:268px;width:1px;height:3px;background:#999"></div><div class="a" style="left:707.3px;top:268px;width:1px;height:3px;background:#999"></div><div class="a" style="left:719.8px;top:268px;width:1px;height:3px;background:#999"></div><div class="a" style="left:732.2px;top:266px;width:1px;height:6px;background:#777"></div><div class="a" style="left:744.7px;top:268px;width:1px;height:3px;background:#999"></div><div class="a" style="left:757.2px;top:268px;width:1px;height:3px;background:#999"></div><div class="a" style="left:769.6px;top:268px;width:1px;height:3px;background:#999"></div><div class="a" style="left:794.6px;top:268px;width:1px;height:3px;background:#999"></div><div class="a" style="left:807.0px;top:268px;width:1px;height:3px;background:#999"></div><div class="a" style="left:819.5px;top:268px;width:1px;height:3px;background:#999"></div><div class="a" style="left:832.0px;top:266px;width:1px;height:6px;background:#777"></div><div class="a" style="left:844.4px;top:268px;width:1px;height:3px;background:#999"></div><div class="a" style="left:856.9px;top:268px;width:1px;height:3px;background:#999"></div><div class="a" style="left:869.3px;top:268px;width:1px;height:3px;background:#999"></div><div class="a" style="left:894.3px;top:268px;width:1px;height:3px;background:#999"></div><div class="a" style="left:906.7px;top:268px;width:1px;height:3px;background:#999"></div><div class="a" style="left:919.2px;top:268px;width:1px;height:3px;background:#999"></div><div class="a" style="left:931.7px;top:266px;width:1px;height:6px;background:#777"></div><div class="a" style="left:944.1px;top:268px;width:1px;height:3px;background:#999"></div><div class="a" style="left:956.6px;top:268px;width:1px;height:3px;background:#999"></div><div class="a" style="left:969.0px;top:268px;width:1px;height:3px;background:#999"></div><div class="a" style="left:994.0px;top:268px;width:1px;height:3px;background:#999"></div><div class="a" style="left:1006.4px;top:268px;width:1px;height:3px;background:#999"></div><div class="a" style="left:1018.9px;top:268px;width:1px;height:3px;background:#999"></div><div class="a" style="left:1031.4px;top:266px;width:1px;height:6px;background:#777"></div><div class="a" style="left:1043.8px;top:268px;width:1px;height:3px;background:#999"></div><div class="a" style="left:1056.3px;top:268px;width:1px;height:3px;background:#999"></div><div class="a" style="left:1068.7px;top:268px;width:1px;height:3px;background:#999"></div><div class="a" style="left:1093.7px;top:268px;width:1px;height:3px;background:#999"></div><div class="a" style="left:1106.1px;top:268px;width:1px;height:3px;background:#999"></div><div class="a" style="left:1118.6px;top:268px;width:1px;height:3px;background:#999"></div><div class="a" style="left:1131.1px;top:266px;width:1px;height:6px;background:#777"></div><div class="a" style="left:1143.5px;top:268px;width:1px;height:3px;background:#999"></div><div class="a" style="left:1156.0px;top:268px;width:1px;height:3px;background:#999"></div><div class="a" style="left:1168.4px;top:268px;width:1px;height:3px;background:#999"></div><div class="a" style="left:1193.4px;top:268px;width:1px;height:3px;background:#999"></div><div class="a" style="left:1205.8px;top:268px;width:1px;height:3px;background:#999"></div><div class="a" style="left:1218.3px;top:268px;width:1px;height:3px;background:#999"></div><div class="a" style="left:1230.8px;top:266px;width:1px;height:6px;background:#777"></div><div class="a" style="left:1243.2px;top:268px;width:1px;height:3px;background:#999"></div><div class="a" style="left:1255.7px;top:268px;width:1px;height:3px;background:#999"></div><div class="a" style="left:1268.1px;top:268px;width:1px;height:3px;background:#999"></div><div class="a" style="left:1293.1px;top:268px;width:1px;height:3px;background:#999"></div><div class="a" style="left:1305.5px;top:268px;width:1px;height:3px;background:#999"></div><div class="a" style="left:1318.0px;top:268px;width:1px;height:3px;background:#999"></div><div class="a" style="left:1330.5px;top:266px;width:1px;height:6px;background:#777"></div><div class="a" style="left:1342.9px;top:268px;width:1px;height:3px;background:#999"></div><div class="a" style="left:1355.4px;top:268px;width:1px;height:3px;background:#999"></div><div class="a" style="left:1367.8px;top:268px;width:1px;height:3px;background:#999"></div><div class="a" style="left:1392.8px;top:268px;width:1px;height:3px;background:#999"></div><div class="a" style="left:1405.2px;top:268px;width:1px;height:3px;background:#999"></div><div class="a" style="left:1417.7px;top:268px;width:1px;height:3px;background:#999"></div><div class="a" style="left:1430.2px;top:266px;width:1px;height:6px;background:#777"></div><div class="a" style="left:1442.6px;top:268px;width:1px;height:3px;background:#999"></div><div class="a" style="left:1455.1px;top:268px;width:1px;height:3px;background:#999"></div><div class="a" style="left:1467.5px;top:268px;width:1px;height:3px;background:#999"></div><div class="a" style="left:1492.5px;top:268px;width:1px;height:3px;background:#999"></div><div class="a" style="left:1504.9px;top:268px;width:1px;height:3px;background:#999"></div><div class="a" style="left:1517.4px;top:268px;width:1px;height:3px;background:#999"></div><div class="a" style="left:1529.8px;top:266px;width:1px;height:6px;background:#777"></div><div class="a" style="left:1542.3px;top:268px;width:1px;height:3px;background:#999"></div><div class="a" style="left:1554.8px;top:268px;width:1px;height:3px;background:#999"></div><div class="a" style="left:1567.2px;top:268px;width:1px;height:3px;background:#999"></div><div class="a" style="left:1592.2px;top:268px;width:1px;height:3px;background:#999"></div><div class="a" style="left:1604.6px;top:268px;width:1px;height:3px;background:#999"></div><div class="a" style="left:1617.1px;top:268px;width:1px;height:3px;background:#999"></div><div class="a" style="left:1629.6px;top:266px;width:1px;height:6px;background:#777"></div><div class="a" style="left:1642.0px;top:268px;width:1px;height:3px;background:#999"></div>
<div class="t" id="t71" style="left:679.4px;top:264.56px;font-size:10.50px;color:#555;font-family:'Liberation Serif',serif;">1</div>
<div class="t" id="t72" style="left:779.1px;top:264.56px;font-size:10.50px;color:#555;font-family:'Liberation Serif',serif;">2</div>
<div class="t" id="t73" style="left:878.8px;top:264.56px;font-size:10.50px;color:#555;font-family:'Liberation Serif',serif;">3</div>
<div class="t" id="t74" style="left:978.5px;top:264.56px;font-size:10.50px;color:#555;font-family:'Liberation Serif',serif;">4</div>
<div class="t" id="t75" style="left:1078.2px;top:264.56px;font-size:10.50px;color:#555;font-family:'Liberation Serif',serif;">5</div>
<div class="t" id="t76" style="left:1177.9px;top:264.56px;font-size:10.50px;color:#555;font-family:'Liberation Serif',serif;">6</div>
<div class="t" id="t77" style="left:1277.6px;top:264.56px;font-size:10.50px;color:#555;font-family:'Liberation Serif',serif;">7</div>
<div class="t" id="t78" style="left:1377.3px;top:264.56px;font-size:10.50px;color:#555;font-family:'Liberation Serif',serif;">8</div>
<div class="t" id="t79" style="left:1477.0px;top:264.56px;font-size:10.50px;color:#555;font-family:'Liberation Serif',serif;">9</div>
<div class="t" id="t80" style="left:1573.2px;top:264.56px;font-size:10.50px;color:#555;font-family:'Liberation Serif',serif;">10</div>
<svg class="a" style="left:577px;top:259px" width="13" height="26" viewBox="0 0 13 26"><path d="M1.5 1h10L6.5 7z" fill="#fff" stroke="#999" stroke-width="1"/><path d="M6.5 9l5 5v3h-10v-3z" fill="#fff" stroke="#999" stroke-width="1"/><rect x="1.5" y="17" width="10" height="7" fill="#fff" stroke="#999" stroke-width="1"/></svg>
<svg class="a" style="left:1653px;top:268px" width="12" height="12" viewBox="0 0 12 12"><path d="M6 1l5 5v5H1V6z" fill="#fff" stroke="#999" stroke-width="1"/></svg>
<div class="a" style="left:1658px;top:263px;width:9px;height:12px;background:#c8c8c8"></div>
<div class="a" style="left:575px;top:283px;width:1093px;height:644px;background:#fff"></div>
<div class="a" style="left:625px;top:283px;width:1002px;height:10px;background:#8c9ba4;border-radius:0 0 6px 6px"></div>
<div class="a" style="left:617px;top:304px;width:1010px;height:53px;background:#3d7590"></div>
<div class="a" style="left:617px;top:356px;width:1010px;height:2px;background:#1f4655"></div>
<div class="a" style="left:617px;top:358px;width:1010px;height:40px;background:#53a8ae"></div>
<div class="a" style="left:617px;top:397.5px;width:1010px;height:1.5px;background:#20484f"></div>
<div class="a" style="left:617px;top:575px;width:1010px;height:41px;background:#53a8ae"></div>
<div class="a" style="left:617px;top:574px;width:1010px;height:1.5px;background:#2d4a50"></div>
<div class="a" style="left:617px;top:615.5px;width:1010px;height:1.5px;background:#20484f"></div>
<div class="a" style="left:617px;top:304px;width:1.5px;height:623px;background:#3a3a3a"></div>
<div class="a" style="left:1625.5px;top:304px;width:1.5px;height:623px;background:#3a3a3a"></div>
<div class="a" style="left:891px;top:398px;width:1.3px;height:177px;background:#505050"></div>
<div class="a" style="left:891px;top:616px;width:1.3px;height:311px;background:#505050"></div>
<div class="a" style="left:617px;top:433px;width:1010px;height:1.2px;background:#505050"></div>
<div class="a" style="left:617px;top:475.5px;width:1010px;height:1.2px;background:#505050"></div>
<div class="a" style="left:617px;top:498.5px;width:1010px;height:1.2px;background:#505050"></div>
<div class="a" style="left:617px;top:651px;width:1010px;height:1.2px;background:#505050"></div>
<div class="a" style="left:617px;top:705.5px;width:1010px;height:1.2px;background:#505050"></div>
<div class="a" style="left:617px;top:760px;width:1010px;height:1.2px;background:#505050"></div>
<div class="a" style="left:617px;top:814.5px;width:1010px;height:1.2px;background:#505050"></div>
<div class="a" style="left:617px;top:868.5px;width:1010px;height:1.2px;background:#505050"></div>
<svg class="a" style="left:640px;top:313px" width="35" height="35" viewBox="0 0 35 35"><circle cx="17.5" cy="17.5" r="16.5" fill="#92cf58"/><path d="M10 18 L15 23.5 L25.5 11.5" fill="none" stroke="#3b6155" stroke-width="3.2"/></svg>
<div class="t" id="t81" style="left:680.0px;top:338.80px;font-size:15.00px;font-weight:bold;color:#fff;-webkit-text-stroke:0.3px #fff;transform:scaleX(1.2323);transform-origin:0 0;">GOAL: REDUCE EMISSIONS FROM THE TRANSPORTATION SECTOR</div>
<div class="t" id="t82" style="left:637.0px;top:369.80px;font-size:15.00px;color:#eaf7f7;-webkit-text-stroke:0.35px #eaf7f7;letter-spacing:0.259px;transform:scaleX(1.2038);transform-origin:0 0;">Strategy: Reduce vehicle miles traveled</div>
<div class="t" id="t83" style="left:637.0px;top:587.80px;font-size:15.00px;color:#eaf7f7;-webkit-text-stroke:0.35px #eaf7f7;letter-spacing:0.275px;transform:scaleX(1.2247);transform-origin:0 0;">Yes Strategy: Enhance public transportation, bicycling, walking, and shared transportation options*</div>
<div class="t" id="t84" style="left:626.5px;top:406.53px;font-size:12.60px;font-weight:bold;color:#000;letter-spacing:1.144px;">ACTION</div>
<div class="t" id="t85" style="left:900.0px;top:406.53px;font-size:12.60px;font-weight:bold;color:#000;letter-spacing:0.551px;">STEPS</div>
<div class="t" id="t86" style="left:626.5px;top:624.53px;font-size:12.60px;font-weight:bold;color:#000;letter-spacing:1.144px;">ACTION</div>
<div class="t" id="t87" style="left:900.0px;top:624.53px;font-size:12.60px;font-weight:bold;color:#000;letter-spacing:0.551px;">STEPS</div>
<div class="t" id="t88" style="left:626.4px;top:437.57px;font-size:13.50px;font-weight:bold;color:#000;-webkit-text-stroke:0.25px #000;letter-spacing:-0.082px;">Improve broadband access across Cape</div>
<div class="t" id="t89" style="left:626.4px;top:455.57px;font-size:13.50px;font-weight:bold;color:#000;-webkit-text-stroke:0.25px #000;letter-spacing:0.875px;">Cod</div>
<div class="t" id="t90" style="left:626.4px;top:479.07px;font-size:13.50px;font-weight:bold;color:#000;-webkit-text-stroke:0.25px #000;letter-spacing:0.732px;">Support work from home policies</div>
<div class="t" id="t91" style="left:626.4px;top:502.57px;font-size:13.50px;font-weight:bold;color:#000;-webkit-text-stroke:0.25px #000;letter-spacing:0.328px;">NO Explore pricing mechanisms</div>
<div class="t" id="t92" style="left:626.4px;top:521.07px;font-size:13.50px;font-weight:bold;color:#000;-webkit-text-stroke:0.25px #000;letter-spacing:0.059px;">that incentivize GHG reduction</div>
<div class="t" id="t93" style="left:626.4px;top:539.77px;font-size:13.50px;font-weight:bold;color:#000;-webkit-text-stroke:0.25px #000;letter-spacing:0.439px;">strategies and funds other</div>
<div class="t" id="t94" style="left:626.4px;top:558.57px;font-size:13.50px;font-weight:bold;color:#000;-webkit-text-stroke:0.25px #000;letter-spacing:0.911px;">strategies</div>
<div class="t" id="t95" style="left:626.4px;top:656.07px;font-size:13.50px;font-weight:bold;color:#000;-webkit-text-stroke:0.25px #000;letter-spacing:0.270px;">Encourage carpooling and ridesharing*</div>
<div class="t" id="t96" style="left:626.4px;top:709.57px;font-size:13.50px;font-weight:bold;color:#000;-webkit-text-stroke:0.25px #000;letter-spacing:-0.009px;">Expansion and improvements of park</div>
<div class="t" id="t97" style="left:626.4px;top:727.57px;font-size:13.50px;font-weight:bold;color:#000;-webkit-text-stroke:0.25px #000;letter-spacing:0.622px;">and ride facilities</div>
<div class="t" id="t98" style="left:626.4px;top:764.57px;font-size:13.50px;font-weight:bold;color:#000;-webkit-text-stroke:0.25px #000;letter-spacing:0.388px;">Improved coordination between modes</div>
<div class="t" id="t99" style="left:626.4px;top:819.17px;font-size:13.50px;font-weight:bold;color:#000;-webkit-text-stroke:0.25px #000;letter-spacing:0.648px;">??Reduce parking</div>
<div class="t" id="t100" style="left:626.4px;top:838.12px;font-size:12.50px;font-weight:bold;color:#000;-webkit-text-stroke:0.25px #000;letter-spacing:0.432px;">standards/requirements</div>
<div class="t" id="t101" style="left:626.4px;top:873.27px;font-size:13.50px;font-weight:bold;color:#000;-webkit-text-stroke:0.25px #000;letter-spacing:0.047px;">Improve and expand the public transit</div>
<div class="t" id="t102" style="left:626.4px;top:891.07px;font-size:13.50px;font-weight:bold;color:#000;-webkit-text-stroke:0.25px #000;letter-spacing:1.039px;">network</div>
<div class="t" id="t103" style="left:900.0px;top:438.09px;font-size:12.30px;font-style:italic;color:#555;letter-spacing:0.536px;">None identified yet</div>
<div class="t" id="t104" style="left:900.0px;top:480.09px;font-size:12.30px;font-style:italic;color:#555;letter-spacing:0.536px;">None identified yet</div>
<div class="t" id="t105" style="left:900.0px;top:503.59px;font-size:12.30px;font-style:italic;color:#555;letter-spacing:0.536px;">None identified yet</div>
<div class="t" id="t106" style="left:900.0px;top:656.79px;font-size:12.30px;font-style:italic;color:#555;letter-spacing:0.536px;">None identified yet</div>
<div class="t" id="t107" style="left:900.0px;top:710.59px;font-size:12.30px;font-style:italic;color:#555;letter-spacing:0.536px;">None identified yet</div>
<div class="t" id="t108" style="left:900.0px;top:765.59px;font-size:12.30px;font-style:italic;color:#555;letter-spacing:0.536px;">None identified yet</div>
<div class="t" id="t109" style="left:900.0px;top:820.19px;font-size:12.30px;font-style:italic;color:#555;letter-spacing:0.536px;">None identified yet</div>
<div class="a" style="left:906px;top:876.2px;width:7px;height:7px;background:#3f7d8c"></div>
<div class="t" id="t110" style="left:924.0px;top:873.27px;font-size:13.50px;font-weight:bold;color:#000;-webkit-text-stroke:0.25px #000;letter-spacing:0.632px;">Expanding routes</div>
<div class="a" style="left:906px;top:894.9px;width:7px;height:7px;background:#3f7d8c"></div>
<div class="t" id="t111" style="left:924.0px;top:891.97px;font-size:13.50px;font-weight:bold;color:#000;-webkit-text-stroke:0.25px #000;letter-spacing:0.590px;">Expanding service days/hours</div>
<div class="a" style="left:906px;top:913.5px;width:7px;height:7px;background:#3f7d8c"></div>
<div class="t" id="t112" style="left:924.0px;top:910.57px;font-size:13.50px;font-weight:bold;color:#000;-webkit-text-stroke:0.25px #000;letter-spacing:0.638px;">Increase frequency on busy routes</div>
<svg class="a" style="left:1089px;top:456px" width="12" height="18" viewBox="0 0 12 18"><path d="M1 1v14l3.5-3.2 2.5 5.5 2-1-2.5-5.3H11z" fill="#fff" stroke="#222" stroke-width="1"/></svg>
<div class="t" id="t113" style="left:330.0px;top:930.27px;font-size:11.50px;color:#555;letter-spacing:-0.385px;">Page 12 of 26</div>
<div class="t" id="t114" style="left:417.0px;top:930.27px;font-size:11.50px;color:#555;letter-spacing:-0.274px;">4451 words</div>
<svg class="a" style="left:493px;top:929px" width="16" height="14" viewBox="0 0 16 14"><path d="M1 1h9v12H1z" fill="none" stroke="#666" stroke-width="1.2"/><path d="M8 7l3 3 4-5M9 13l6-6" fill="none" stroke="#666" stroke-width="1.2"/></svg>
<svg class="a" style="left:1550px;top:928px" width="17" height="16" viewBox="0 0 17 16"><path d="M4 2h6l3 3v9H4z" fill="none" stroke="#555" stroke-width="1.2"/><path d="M1 4V1h3M13 1h3v3M1 12v3h3M16 12v3h-3" fill="none" stroke="#555" stroke-width="1.1"/></svg>
<div class="t" id="t115" style="left:1568.0px;top:930.27px;font-size:11.50px;color:#555;letter-spacing:-1.082px;">Focus</div>
<svg class="a" style="left:1620px;top:929px" width="17" height="14" viewBox="0 0 17 14"><path d="M1 1h7v12H1zM9 1h7v12H9z" fill="none" stroke="#555" stroke-width="1.2"/><path d="M3 4h3M3 7h3M11 4h3M11 7h3" stroke="#555" stroke-width="1"/></svg>
<div class="a" style="left:1650px;top:927px;width:40px;height:19px;background:#dcdcdc"></div>
<svg class="a" style="left:1662px;top:929px" width="14" height="15" viewBox="0 0 14 15"><rect x="1" y="1" width="12" height="13" fill="#bdbdbd" stroke="#555" stroke-width="1.2"/><path d="M3 11h8" stroke="#555" stroke-width="1"/></svg>
<svg class="a" style="left:1704px;top:928px" width="17" height="16" viewBox="0 0 17 16"><rect x="1" y="1" width="12" height="13" fill="none" stroke="#555" stroke-width="1.2"/><circle cx="12.5" cy="11.5" r="3.8" fill="#666"/><path d="M3 4h6M3 7h5" stroke="#555" stroke-width="1"/></svg>
<div class="a" style="left:1737px;top:935.5px;width:9px;height:1.2px;background:#555"></div>
<div class="a" style="left:1752px;top:936px;width:104px;height:1px;background:#bbb"></div>
<div class="a" style="left:1800px;top:930px;width:4px;height:12px;background:#666"></div>
<div class="a" style="left:1859px;top:935.5px;width:9px;height:1.2px;background:#555"></div>
<div class="a" style="left:1863px;top:931px;width:1.2px;height:9px;background:#555"></div>
<div class="t" id="t116" style="left:1882.0px;top:930.69px;font-size:11.00px;color:#555;letter-spacing:-1.047px;">100%</div>
<div class="a" style="left:322px;top:946px;width:1594px;height:42px;background:#3c3834"></div>
<svg class="a" style="left:338px;top:957px" width="19" height="20" viewBox="0 0 19 20"><path d="M1 3.5l7-1v7H1zM9 2.3l9-1.3v8.5H9zM1 10.5h7v7l-7-1zM9 10.5h9V19l-9-1.3z" fill="#fff"/></svg>
<svg class="a" style="left:388px;top:956px" width="25" height="21" viewBox="0 0 25 21"><path d="M1 2h9l2 2h12v16H1z" fill="#f0c040"/><rect x="1" y="6" width="23" height="14" fill="#f8d878"/><rect x="5" y="12" width="15" height="8" fill="#2a80c8"/><rect x="9" y="14" width="7" height="6" fill="#f8c040"/></svg>
<svg class="a" style="left:440px;top:955px" width="25" height="24" viewBox="0 0 25 24"><path d="M6.5 1L1 5l5.5 4L12.5 5zM18.5 1L12.5 5l6 4L24 5zM1 13l5.5 4 6-4-6-4zM24 13l-5.5 4-6-4 6-4zM6.5 18.5l6 4 6-4-6-4z" fill="#fff"/></svg>
<svg class="a" style="left:488px;top:955px" width="27" height="24" viewBox="0 0 27 24"><circle cx="15" cy="12" r="11.5" fill="#d9512c"/><path d="M15 0.5A11.5 11.5 0 0 1 26.5 12H15z" fill="#ff8f6b"/><rect x="1" y="5" width="13" height="13" rx="1.5" fill="#c43e1c"/><text x="3.5" y="15.5" font-size="10" font-weight="bold" fill="#fff" font-family="Liberation Sans">P</text></svg>
<svg class="a" style="left:541px;top:955px" width="27" height="24" viewBox="0 0 27 24"><rect x="7" y="1" width="19" height="22" rx="1.5" fill="#21a366"/><rect x="7" y="12" width="19" height="11" fill="#107c41"/><rect x="16" y="1" width="10" height="11" fill="#33c481"/><rect x="1" y="5" width="13" height="13" rx="1.5" fill="#185c37"/><text x="3.5" y="15.5" font-size="10" font-weight="bold" fill="#fff" font-family="Liberation Sans">X</text></svg>
<svg class="a" style="left:591px;top:955px" width="27" height="24" viewBox="0 0 27 24"><rect x="7" y="1" width="19" height="22" rx="1.5" fill="#2b7cd3"/><rect x="7" y="1" width="19" height="6" fill="#41a5ee"/><rect x="7" y="17" width="19" height="6" fill="#185abd"/><rect x="1" y="5" width="13" height="13" rx="1.5" fill="#185abd"/><text x="2" y="15.5" font-size="9.5" font-weight="bold" fill="#fff" font-family="Liberation Sans">W</text></svg>
<svg class="a" style="left:645px;top:955px" width="24" height="24" viewBox="0 0 24 24"><circle cx="12" cy="12" r="11.5" fill="#db4437"/><path d="M12 12L2 17.75A11.5 11.5 0 0 0 12 23.5z M12 12L22 6.25A11.5 11.5 0 0 1 12 23.5z" fill="#0f9d58"/><path d="M12 12L22 6.25A11.5 11.5 0 0 1 12 23.5z" fill="#f4c20d"/><path d="M12 12L2 17.75A11.5 11.5 0 0 1 2 6.25z" fill="#0f9d58"/><circle cx="12" cy="12" r="5.2" fill="#fff"/><circle cx="12" cy="12" r="4" fill="#4285f4"/></svg>
<svg class="a" style="left:695px;top:955px" width="27" height="24" viewBox="0 0 27 24"><rect x="8" y="1" width="18" height="22" rx="1.5" fill="#0f78d4"/><rect x="16" y="1" width="10" height="11" fill="#28a8ea"/><rect x="8" y="12" width="18" height="11" fill="#0364b8"/><rect x="1" y="5" width="13" height="13" rx="1.5" fill="#0a5cb0"/><circle cx="7.5" cy="11.5" r="3.6" fill="none" stroke="#fff" stroke-width="1.8"/></svg>
<svg class="a" style="left:750px;top:954px" width="24" height="26" viewBox="0 0 24 26"><path d="M5 3h14v14" fill="none" stroke="#e04a30" stroke-width="3"/><path d="M12 1v12l-6 6M12 13l4 7" fill="none" stroke="#e8e8e8" stroke-width="1.6"/><circle cx="5" cy="21" r="3" fill="none" stroke="#3a90e0" stroke-width="2"/><circle cx="16" cy="22" r="3" fill="none" stroke="#3a90e0" stroke-width="2"/></svg>
<svg class="a" style="left:800px;top:955px" width="24" height="24" viewBox="0 0 24 24"><circle cx="12" cy="12" r="11.5" fill="#f09a48"/><circle cx="12" cy="12" r="9" fill="#f4a858"/><g stroke="#fff" stroke-width="1.5"><path d="M12 5v4M12 15v4M5 12h4M15 12h4M7 7l3 3M14 14l3 3M17 7l-3 3M10 14l-3 3"/></g></svg>
<div class="a" style="left:585px;top:985.5px;width:43px;height:2.5px;background:#a3c3ea"></div>
<div class="a" style="left:637px;top:985.5px;width:42px;height:2.5px;background:#a3c3ea"></div>
<div class="a" style="left:688px;top:985.5px;width:43px;height:2.5px;background:#a3c3ea"></div>
<div class="a" style="left:791px;top:985.5px;width:43px;height:2.5px;background:#a3c3ea"></div>
<svg class="a" style="left:1523px;top:956px" width="24" height="24" viewBox="0 0 24 24"><circle cx="12" cy="12" r="11" fill="#1a90d8" stroke="#fff" stroke-width="1.6"/><text x="6.5" y="17.5" font-size="15" font-weight="bold" fill="#fff" font-family="Liberation Sans">?</text></svg>
<svg class="a" style="left:1561px;top:963px" width="13" height="8" viewBox="0 0 13 8"><path d="M1 7l5.5-5.5L12 7" fill="none" stroke="#ddd" stroke-width="1.3"/></svg>
<svg class="a" style="left:1591px;top:961px" width="20" height="13" viewBox="0 0 20 13"><path d="M4 12h13a3 3 0 0 0 0-6 5 5 0 0 0-9-2A4 4 0 0 0 4 12z" fill="#e8e8e8"/></svg>
<svg class="a" style="left:1627px;top:958px" width="11" height="20" viewBox="0 0 11 20"><rect x="2" y="1" width="7" height="12" rx="3" fill="#eee"/><path d="M5.5 14v5" stroke="#ddd" stroke-width="1.2"/></svg>
<svg class="a" style="left:1657px;top:961px" width="21" height="12" viewBox="0 0 21 12"><rect x="4" y="2" width="15" height="9" fill="#eee" stroke="#ddd" stroke-width="1"/><path d="M1 4h3M2.5 1v6" stroke="#ddd" stroke-width="1.2"/></svg>
<svg class="a" style="left:1692px;top:959px" width="17" height="16" viewBox="0 0 17 16"><path d="M1.5 14A13 13 0 0 1 15 1M4.5 14A10 10 0 0 1 15 4M7.5 14A7 7 0 0 1 15 7" fill="none" stroke="#ccc" stroke-width="1.3"/><circle cx="12.5" cy="13" r="1.6" fill="#eee"/></svg>
<svg class="a" style="left:1724px;top:959px" width="20" height="17" viewBox="0 0 20 17"><path d="M1 6h4l5-4v13l-5-4H1z" fill="none" stroke="#ddd" stroke-width="1.3"/><path d="M13 6c1 1.5 1 3.5 0 5M16 4c2 2.5 2 6.5 0 9" fill="none" stroke="#aaa" stroke-width="1.2"/></svg>
<svg class="a" style="left:1761px;top:958px" width="20" height="20" viewBox="0 0 20 20"><path d="M2 18c2-6 6-4 8-8s3-7 6-8c2 1 1 4-1 6l-8 8c-2 2-4 1-3-1" fill="none" stroke="#ddd" stroke-width="1.5"/></svg>
<div class="t" id="t117" style="left:1801.0px;top:953.42px;font-size:12.50px;color:#f0f0f0;letter-spacing:-0.261px;">10:34 AM</div>
<div class="t" id="t118" style="left:1798.0px;top:971.92px;font-size:12.50px;color:#f0f0f0;letter-spacing:0.164px;">3/11/2021</div>
<svg class="a" style="left:1872px;top:958px" width="19" height="20" viewBox="0 0 19 20"><path d="M1 1h17v14H11l-1.5 3L8 15H1z" fill="#f4f4f4"/><path d="M4 5h11M4 8h11M4 11h7" stroke="#555" stroke-width="1"/></svg></body></html>
